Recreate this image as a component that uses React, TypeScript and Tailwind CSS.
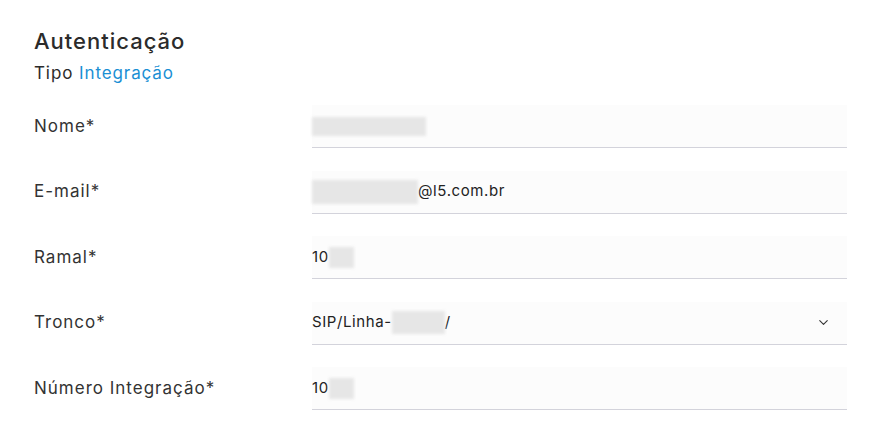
import { ChevronDown } from "lucide-react";

const Blur = ({ w, h }: { w: number; h: number }) => (
  <span
    className="inline-block bg-[#e6e6e6] blur-[1.5px] align-middle"
    style={{ width: w, height: h }}
  />
);

const rows: { label: string; value: React.ReactNode; select?: boolean }[] = [
  { label: "Nome*", value: <Blur w={114} h={19} /> },
  {
    label: "E-mail*",
    value: (
      <>
        <Blur w={106} h={24} />
        <span>@l5.com.br</span>
      </>
    ),
  },
  {
    label: "Ramal*",
    value: (
      <>
        <span>10</span>
        <Blur w={25} h={21} />
      </>
    ),
  },
  {
    label: "Tronco*",
    value: (
      <>
        <span>SIP/Linha-</span>
        <Blur w={53} h={23} />
        <span>/</span>
      </>
    ),
    select: true,
  },
  {
    label: "Número Integração*",
    value: (
      <>
        <span>10</span>
        <Blur w={25} h={21} />
      </>
    ),
  },
];

export default function App() {
  return (
    <div className="w-[869px] h-[425px] bg-white font-['Inter',sans-serif] text-[#2b2b2b] pl-[34px] pr-[22px] pt-[28px]">
      <h1 className="text-[22px] font-medium leading-[26px] tracking-[1px]">Autenticação</h1>
      <p className="mt-[8px] text-[17px] leading-[22px] tracking-[0.9px]">
        Tipo <span className="text-[#1a8fd4]">Integração</span>
      </p>
      <div className="mt-[21px] flex flex-col gap-[22.5px]">
        {rows.map((r) => (
          <div key={r.label} className="flex items-center">
            <div className="w-[278px] text-[17px] tracking-[1px] text-[#333]">{r.label}</div>
            <div className="flex-1 h-[43px] bg-[#fcfcfc] border-b border-[#d3d3db] flex items-center pr-[16px] text-[15px] tracking-[0.6px] text-[#222]">
              <div className="flex-1 flex items-center">{r.value}</div>
              {r.select && <ChevronDown className="w-[15px] h-[15px] text-[#333]" strokeWidth={1.75} />}
            </div>
          </div>
        ))}
      </div>
    </div>
  );
}
